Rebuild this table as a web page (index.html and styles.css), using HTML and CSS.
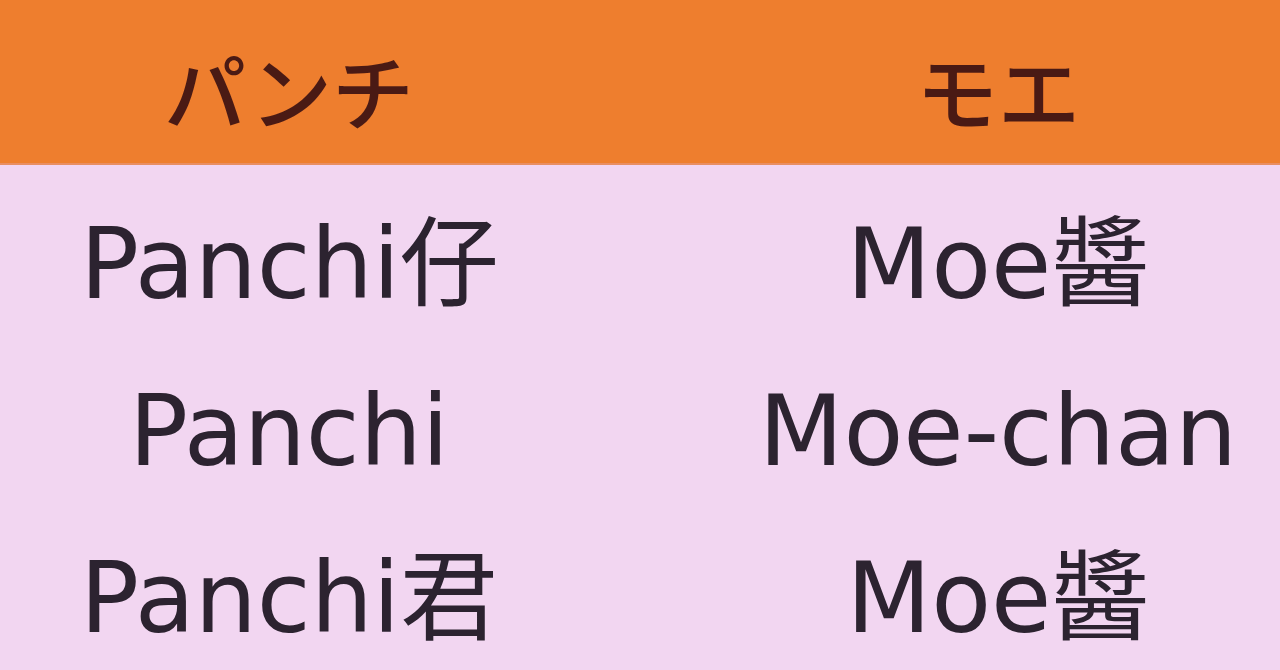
FILE: index.html
```html
<!DOCTYPE html>
<html lang="ja">
<head>
<meta charset="utf-8">
<link rel="stylesheet" href="styles.css">
</head>
<body>
<div class="table">
  <div class="row head">
    <div class="cell c1">パンチ</div>
    <div class="cell c2">モエ</div>
  </div>
  <div class="body">
    <div class="row">
      <div class="cell c1">Panchi仔</div>
      <div class="cell c2">Moe醬</div>
    </div>
    <div class="row">
      <div class="cell c1">Panchi</div>
      <div class="cell c2">Moe-chan</div>
    </div>
    <div class="row">
      <div class="cell c1">Panchi君</div>
      <div class="cell c2">Moe醬</div>
    </div>
  </div>
</div>
</body>
</html>
```

FILE: styles.css
```css
html, body {
  margin: 0;
  padding: 0;
  width: 1280px;
  height: 670px;
  overflow: hidden;
  background: #f2d6f1;
}
.table {
  display: flex;
  flex-direction: column;
  font-family: "DejaVu Sans", "Noto Sans CJK TC", sans-serif;
}
.row {
  display: grid;
  grid-template-columns: 578px 564px;
  column-gap: 138px;
  height: 167px;
  align-items: center;
  box-sizing: border-box;
}
.cell {
  text-align: center;
  white-space: nowrap;
  line-height: 1;
}
.head {
  height: 165px;
  background: #ee7e2e;
  border-bottom: 2px solid #e98e62;
  padding-top: 14px;
}
.head .cell {
  font-family: "Noto Sans CJK JP", sans-serif;
  font-size: 82px;
  font-weight: 500;
  color: #4a1a14;
}
.body {
  background: #f2d6f1;
}
.body .row {
  padding-top: 30px;
}
.body .cell {
  font-size: 98px;
  color: #2c2330;
}
```
